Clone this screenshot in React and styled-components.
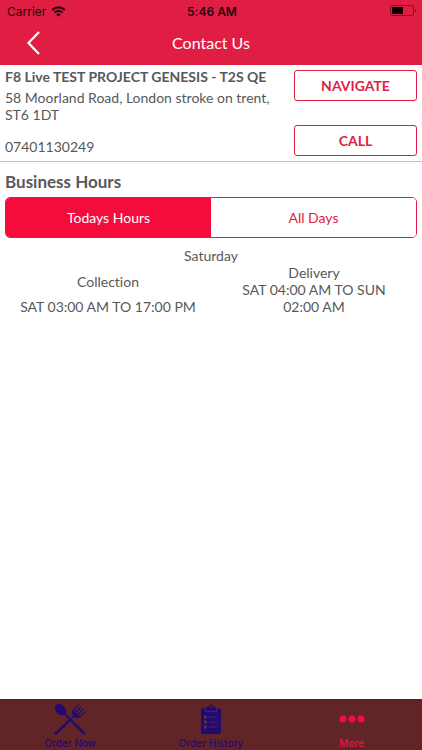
import React, { useState } from "react";
import styled, { createGlobalStyle } from "styled-components";

const hours = {
  today: [
    {
      day: "Saturday",
      collection: "SAT 03:00 AM TO 17:00 PM",
      delivery: "SAT 04:00 AM TO SUN 02:00 AM",
    },
  ],
};

const App = () => {
  const [tab, setTab] = useState("today");

  return (
    <>
      <GlobalStyle />
      <StPage>
        <StHeader>
          <StStatusBar>
            <StCarrier>
              Carrier
              <WifiIcon />
            </StCarrier>
            <StTime>5:46 AM</StTime>
            <StBattery>
              <BatteryIcon />
            </StBattery>
          </StStatusBar>
          <StNavBar>
            <StBackBtn type="button" aria-label="Back">
              <BackIcon />
            </StBackBtn>
            <StTitle>Contact Us</StTitle>
          </StNavBar>
        </StHeader>

        <StMain>
          <StContact>
            <StContactInfo>
              <StName>F8 Live TEST PROJECT GENESIS - T2S QE</StName>
              <StAddress>
                58 Moorland Road, London stroke on trent,
                <br />
                ST6 1DT
              </StAddress>
              <StPhone>07401130249</StPhone>
            </StContactInfo>
            <StContactBtns>
              <StOutlineBtn type="button">NAVIGATE</StOutlineBtn>
              <StOutlineBtn type="button">CALL</StOutlineBtn>
            </StContactBtns>
          </StContact>

          <StHours>
            <StHoursTitle>Business Hours</StHoursTitle>
            <StTabs>
              <StTab
                type="button"
                $active={tab === "today"}
                onClick={() => setTab("today")}
              >
                Todays Hours
              </StTab>
              <StTab
                type="button"
                $active={tab === "all"}
                onClick={() => setTab("all")}
              >
                All Days
              </StTab>
            </StTabs>
            {hours.today.map((item) => (
              <StDay key={item.day}>
                <div>{item.day}</div>
                <StDayCols>
                  <StDayCol $gap="8px">
                    <span>Collection</span>
                    <span>{item.collection}</span>
                  </StDayCol>
                  <StDayCol>
                    <span>Delivery</span>
                    <span>{item.delivery}</span>
                  </StDayCol>
                </StDayCols>
              </StDay>
            ))}
          </StHours>
        </StMain>

        <StBottomNav>
          <StNavLink href="#order">
            <CutleryIcon />
            Order Now
          </StNavLink>
          <StNavLink href="#history">
            <ClipboardIcon />
            Order History
          </StNavLink>
          <StNavLink href="#more" $active>
            <MoreIcon />
            More
          </StNavLink>
        </StBottomNav>
      </StPage>
    </>
  );
};

export default App;

const WifiIcon = () => (
  <svg width="15" height="11" viewBox="0 0 14 11" fill="none" stroke="#2b050c">
    <path d="M0.7 4a9 9 0 0 1 12.6 0" strokeWidth="2.2" />
    <path d="M3 6.600a5.600 5.600 0 0 1 8 0" strokeWidth="2" />
    <path d="M7 10.800 4.700 8.500a3.200 3.200 0 0 1 4.600 0z" fill="#2b050c" stroke="none" />
  </svg>
);

const BatteryIcon = () => (
  <svg width="27" height="12" viewBox="0 0 27 12">
    <rect
      x="0.5"
      y="0.5"
      width="23"
      height="10"
      rx="2"
      fill="none"
      stroke="#7d1028"
    />
    <rect x="2" y="2" width="11" height="7" fill="#000" />
    <path d="M25 3.8c1.5.6 1.5 2.9 0 3.5z" fill="#7d1028" />
  </svg>
);

const BackIcon = () => (
  <svg width="14" height="24" viewBox="0 0 14 24" fill="none">
    <path d="M13 1 2.500 12 13 23" stroke="#fff" strokeWidth="2.200" />
  </svg>
);

const CutleryIcon = () => (
  <svg width="32" height="32" viewBox="0 0 32 32" fill="currentColor">
    {/* spoon */}
    <ellipse cx="6.600" cy="5.700" rx="6.600" ry="4.800" transform="rotate(42 6.600 5.700)" />
    <path d="M10.300 10.800 11.500 9.500 31.300 28.500c1 1.200-1 3.100-2.200 2z" />
    {/* fork */}
    <path d="M21.900 11.300 20.600 10 .7 28.500c-1 1.200 1 3.100 2.200 2z" />
    <path d="M18.800 5.500 26.800 13c-1.900 1.500-4.600 1.500-6.500.1l-1.400-1.500c-1.400-1.900-1.400-4.300-.1-6.100z" />
    <path
      d="M24.200 1 19.700 6.100M26.700 3.200 22 8M29 5.500l-4.800 4.800M31.200 7.800l-5.200 4.600"
      fill="none"
      stroke="currentColor"
      strokeLinecap="round"
      strokeWidth="1.300"
    />
  </svg>
);

const ClipboardIcon = () => (
  <svg width="20" height="32" viewBox="0 0 20 32">
    <path
      d="M1.500 4.500H5V3.800c0-.6.4-1 1-1h1.500c.2-3 4.800-3 5 0H14c.6 0 1 .4 1 1v.7h3.500c1 0 1.500.5 1.500 1.500v22.500c0 1-.5 1.500-1.500 1.500h-17C.5 30 0 29.500 0 28.500V6c0-1 .5-1.500 1.500-1.500z"
      fill="currentColor"
    />
    <circle cx="10" cy="3" r="0.900" fill="#622527" />
    <g fill="none" stroke="#54254a" strokeWidth="1">
      <path d="M4.500 5v2.500h11V5" />
      <path d="M8 13h8.500M8 18h8.500M8 23h8.500" />
    </g>
    <g fill="#54304a">
      <rect x="3" y="11.500" width="3" height="3" />
      <rect x="3" y="16.500" width="3" height="3" />
      <rect x="3" y="21.500" width="3" height="3" />
    </g>
  </svg>
);

const MoreIcon = () => (
  <svg width="26" height="32" viewBox="0 0 26 32" fill="currentColor">
    <circle cx="4" cy="15" r="3.500" />
    <circle cx="13" cy="15" r="3.500" />
    <circle cx="22" cy="15" r="3.500" />
  </svg>
);

const GlobalStyle = createGlobalStyle`
  * {
    box-sizing: border-box;
  }
  body {
    margin: 0;
    background-color: #fff;
    color: #58585a;
    font-family: Lato, "Liberation Sans", sans-serif;
    font-size: 14px;
    font-variant-ligatures: none;
    line-height: 17px;
  }
  button {
    font-family: inherit;
    cursor: pointer;
  }
`;

const StPage = styled.div`
  display: flex;
  flex-direction: column;
  min-height: 100vh;
`;

const StHeader = styled.header`
  background-color: #e01e43;
  padding-bottom: 2px;
`;

const StStatusBar = styled.div`
  display: grid;
  grid-template-columns: 1fr auto 1fr;
  align-items: center;
  height: 22px;
  padding: 0 5px 0 7px;
  color: #2b050c;
  font-family: Inter, "Liberation Sans", sans-serif;
  font-size: 12px;
`;

const StCarrier = styled.div`
  display: flex;
  align-items: center;
  gap: 5px;
`;

const StTime = styled.div`
  font-weight: 600;
`;

const StBattery = styled.div`
  display: flex;
  justify-content: flex-end;
`;

const StNavBar = styled.div`
  display: grid;
  grid-template-columns: 1fr auto 1fr;
  align-items: center;
  height: 41px;
  padding: 0 16px;
`;

const StBackBtn = styled.button`
  display: flex;
  justify-self: start;
  padding: 4px 10px;
  border: none;
  background: none;
`;

const StTitle = styled.h1`
  margin: 0;
  color: #fff;
  font-size: 16px;
  font-weight: 400;
`;

const StMain = styled.main`
  flex: 1;
`;

const StContact = styled.section`
  display: flex;
  justify-content: space-between;
  gap: 8px;
  padding: 3px 5px 5px;
  border-bottom: 1px solid #c0c0c2;
`;

const StContactInfo = styled.div`
  display: flex;
  flex-direction: column;
  white-space: nowrap;
`;

const StName = styled.h2`
  margin: 0 0 4px;
  font-size: 14px;
  font-weight: 700;
`;

const StAddress = styled.p`
  margin: 0 0 15px;
`;

const StPhone = styled.p`
  margin: 0 0 1px;
`;

const StContactBtns = styled.div`
  display: flex;
  flex-direction: column;
  justify-content: space-between;
  flex: 0 0 123px;
  padding-top: 2px;
`;

const StOutlineBtn = styled.button`
  height: 31px;
  padding: 0 0 1px;
  border: 1px solid #e01e43;
  border-radius: 3px;
  background-color: #fff;
  color: #e01e43;
  font-size: 14px;
  font-weight: 700;
`;

const StHours = styled.section`
  padding: 11px 5px;
`;

const StHoursTitle = styled.h2`
  margin: 0 0 6px;
  font-size: 17px;
  font-weight: 700;
  line-height: 18px;
`;

const StTabs = styled.div`
  display: flex;
  border: 1px solid #e01e43;
  border-radius: 5px;
  overflow: hidden;
`;

const StTab = styled.button`
  flex: 1;
  height: 39px;
  padding: 0;
  border: none;
  background-color: ${(props) => (props.$active ? "#f50b3c" : "#fff")};
  color: ${(props) => (props.$active ? "#fff" : "#e01e43")};
  font-size: 14px;
`;

const StDay = styled.div`
  padding-top: 9px;
  text-align: center;
`;

const StDayCols = styled.div`
  display: flex;
`;

const StDayCol = styled.div`
  display: flex;
  flex: 1;
  flex-direction: column;
  justify-content: flex-end;
  gap: ${(props) => props.$gap || "0"};
  padding: 0 12px;
`;

const StBottomNav = styled.nav`
  display: flex;
  background-color: #622527;
  border-top: 1px solid #54201f;
`;

const StNavLink = styled.a`
  display: flex;
  flex: 1;
  flex-direction: column;
  align-items: center;
  padding-top: 4px;
  color: ${(props) => (props.$active ? "#f50b3c" : "#210b72")};
  font-family: Inter, "Liberation Sans", sans-serif;
  font-size: 10px;
  font-weight: 500;
  line-height: 14px;
  text-decoration: none;
`;
